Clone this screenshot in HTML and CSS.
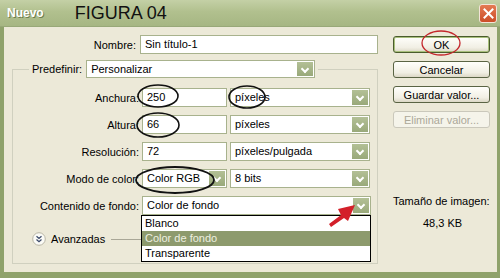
FILE: index.html
```html
<!DOCTYPE html>
<html>
    <head>
        <title>Nuevo</title>
        <link rel="stylesheet" href="styles.css">
    </head>
    <body>
        <div class="window">
            <div class="titlebar">
                <span class="caption">Nuevo</span>
                <span class="figure">FIGURA 04</span>
                <span class="close">
                    <svg width="11" height="11" viewBox="0 0 11 11"><path d="M1.5 1.5 L9.5 9.5 M9.5 1.5 L1.5 9.5" stroke="#fff" stroke-width="2" stroke-linecap="square"/></svg>
                </span>
            </div>
            <div class="frame">
                <div class="form">
                    <div class="row name">
                        <label>Nombre:</label>
                        <div class="field wide">Sin título-1</div>
                    </div>
                    <fieldset class="preset">
                        <legend>
                            <label>Predefinir:</label>
                            <div class="select preset-select"><span>Personalizar</span><b></b></div>
                        </legend>
                        <div class="row">
                            <label>Anchura:</label>
                            <div class="field num">250</div>
                            <div class="select unit"><span>píxeles</span><b></b></div>
                        </div>
                        <div class="row">
                            <label>Altura:</label>
                            <div class="field num">66</div>
                            <div class="select unit"><span>píxeles</span><b></b></div>
                        </div>
                        <div class="row">
                            <label>Resolución:</label>
                            <div class="field num">72</div>
                            <div class="select unit"><span>píxeles/pulgada</span><b></b></div>
                        </div>
                        <div class="row">
                            <label>Modo de color:</label>
                            <div class="select num"><span>Color RGB</span><b></b></div>
                            <div class="select unit"><span>8 bits</span><b></b></div>
                        </div>
                        <div class="row">
                            <label>Contenido de fondo:</label>
                            <div class="select full">
                                <span>Color de fondo</span><b></b>
                                <ul class="list">
                                    <li>Blanco</li>
                                    <li class="on">Color de fondo</li>
                                    <li>Transparente</li>
                                </ul>
                            </div>
                        </div>
                        <div class="advanced">
                            <svg class="chev" width="14" height="14" viewBox="0 0 14 14">
                                <circle cx="7" cy="7" r="6.3" fill="#fbfbf6" stroke="#b9b6a6"/>
                                <path d="M4.5 4.3 L7 6.5 L9.5 4.3 M4.5 7.5 L7 9.7 L9.5 7.5" fill="none" stroke="#3c4a6a" stroke-width="1.3"/>
                            </svg>
                            <span>Avanzadas</span>
                            <i></i>
                        </div>
                    </fieldset>
                </div>
                <div class="side">
                    <button class="btn default">OK</button>
                    <button class="btn">Cancelar</button>
                    <button class="btn">Guardar valor...</button>
                    <button class="btn" disabled>Eliminar valor...</button>
                    <div class="size">
                        <p>Tamaño de imagen:</p>
                        <p class="value">48,3 KB</p>
                    </div>
                </div>
            </div>

            <!-- hand-drawn marks on top of the screenshot -->
            <svg class="marks" width="500" height="278" viewBox="0 0 500 278">
                <ellipse cx="441" cy="43" rx="19" ry="12" fill="none" stroke="#c3262b" stroke-width="1.3"/>
                <ellipse cx="158" cy="96" rx="20" ry="11" fill="none" stroke="#111" stroke-width="1.6"/>
                <ellipse cx="158" cy="125" rx="21" ry="12" fill="none" stroke="#111" stroke-width="1.6"/>
                <ellipse cx="247" cy="97" rx="18" ry="11" fill="none" stroke="#111" stroke-width="1.6"/>
                <ellipse cx="175" cy="180" rx="39" ry="13" fill="none" stroke="#111" stroke-width="1.8"/>
                <polygon points="329,224 341,215 338,209 355,205 348,221 344,218 331,227" fill="#d3202a"/>
            </svg>
        </div>
    </body>
</html>
```

FILE: styles.css
```css
body {
    margin: 0;
    font: 11px "Liberation Sans", Arial, sans-serif;
    color: #000;
}
    .window {
        position: relative;
        width: 500px;
        height: 278px;
        display: flex;
        flex-direction: column;
        background: #ece9d8;
        overflow: hidden;
    }
    .titlebar {
        display: flex;
        align-items: center;
        height: 27px;
        flex: none;
        background: linear-gradient(#c4d0a6, #b1c08e 45%, #a6b683);
        border-bottom: 1px solid #98a878;
        box-sizing: border-box;
    }
    .caption {
        margin-left: 7px;
        font-weight: bold;
        font-size: 12px;
        color: #fff;
        text-shadow: 1px 1px 0 #6e7d4e;
    }
    .figure {
        margin-left: 31px;
        font-size: 18px;
        color: #111;
    }
    .close {
        display: flex;
        align-items: center;
        justify-content: center;
        margin-left: auto;
        margin-right: 3px;
        width: 16px;
        height: 17px;
        border: 1px solid #f3e4d8;
        border-radius: 3px;
        background: linear-gradient(#e47a52, #cc4d28);
    }

    .frame {
        flex: 1;
        display: flex;
        padding: 8px 0 0 8px;
        border-left: 4px solid #8fa26b;
        border-right: 3px solid #8fa26b;
        border-bottom: 6px solid #8fa26b;
    }
    .form {
        width: 366px;
    }
    .row {
        display: flex;
        align-items: center;
        gap: 3px;
        height: 19px;
        margin-bottom: 8px;
    }
    .row label {
        width: 126px;
        text-align: right;
        white-space: nowrap;
    }
    .row.name {
        gap: 4px;
        margin-bottom: 6px;
    }
    .row.name label {
        width: 124px;
    }

    .field, .select {
        position: relative;
        height: 19px;
        box-sizing: border-box;
        border: 1px solid #a8b28d;
        background: #fff;
        line-height: 17px;
        white-space: nowrap;
    }
    .field {
        padding: 0 4px;
    }
    .select {
        display: flex;
        padding-left: 4px;
    }
    .select span {
        flex: 1;
    }
    .select b {
        position: relative;
        width: 16px;
        margin: 0;
        background: linear-gradient(#b3c096, #99a97a);
        border: 1px solid #fff;
        border-radius: 1px;
    }
    .select b:after {
        content: '';
        position: absolute;
        left: 5px;
        top: 4px;
        width: 4px;
        height: 4px;
        border-right: 2px solid #fff;
        border-bottom: 2px solid #fff;
        transform: rotate(45deg);
    }
    .wide { width: 238px; }
    .num { width: 85px; }
    .unit { width: 140px; }
    .full { width: 229px; }

    .preset {
        margin: 0;
        padding: 10px 0 17px;
        border: 1px solid #d0d0bf;
        min-width: 0;
    }
    .preset legend {
        display: flex;
        align-items: center;
        gap: 4px;
        margin-left: 16px;
        padding: 0 3px;
    }
    .preset-select {
        width: 229px;
        height: 18px;
        line-height: 16px;
    }

    .list {
        position: absolute;
        top: 100%;
        left: -2px;
        right: -1px;
        margin: 1px 0 0;
        padding: 0;
        list-style: none;
        background: #fff;
        border: 1px solid #000;
        z-index: 2;
    }
    .list li {
        height: 15px;
        line-height: 15px;
        padding-left: 3px;
    }
    .list li.on {
        background: #8d9a6d;
        color: #eef0e0;
    }

    .advanced {
        display: flex;
        align-items: center;
        height: 14px;
        margin-top: 17px;
        padding-left: 19px;
    }
    .advanced span {
        margin-left: 5px;
    }
    .advanced i {
        width: 34px;
        margin-left: 6px;
        border-top: 1px solid #a9a797;
    }

    .side {
        display: flex;
        flex-direction: column;
        gap: 8px;
        width: 97px;
        margin-left: 15px;
        padding-top: 1px;
    }
    .btn {
        height: 17px;
        width: 97px;
        padding: 0;
        font: inherit;
        color: #000;
        border: 1px solid #5a6444;
        border-radius: 3px;
        background: linear-gradient(#fffffb, #f1efe4 70%, #dcd8c6);
    }
    .btn.default {
        border-color: #4a5c2c;
        box-shadow: inset 0 0 0 1px #a9c07c;
    }
    .btn:disabled {
        color: #aca899;
        border-color: #cac8bb;
        background: #f5f4ea;
    }
    .size {
        margin-top: 58px;
    }
    .size p {
        margin: 0 0 8px;
        line-height: 14px;
    }
    .size .value {
        padding-left: 30px;
    }

    .marks {
        position: absolute;
        left: 0;
        top: 0;
        pointer-events: none;
        z-index: 3;
    }
```
